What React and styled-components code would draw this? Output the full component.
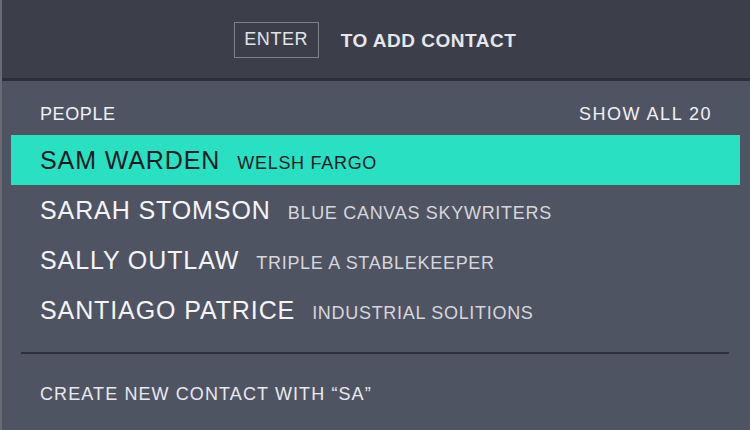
import styled, { createGlobalStyle } from 'styled-components';

const GlobalStyle = createGlobalStyle`
  html, body {
    margin: 0;
    padding: 0;
    background: #4f5463;
  }
  body {
    font-family: "Liberation Sans", Arial, sans-serif;
  }
`;

const people = [
  { name: 'SAM WARDEN', company: 'WELSH FARGO' },
  { name: 'SARAH STOMSON', company: 'BLUE CANVAS SKYWRITERS' },
  { name: 'SALLY OUTLAW', company: 'TRIPLE A STABLEKEEPER' },
  { name: 'SANTIAGO PATRICE', company: 'INDUSTRIAL SOLITIONS' },
];

const Panel = styled.div`
  width: 748px;
  height: 430px;
  border-left: 2px solid #686b74;
  background: #4f5463;
  display: flex;
  flex-direction: column;
  overflow: hidden;
`;

const Header = styled.div`
  height: 78px;
  flex-shrink: 0;
  background: #3c3f49;
  border-bottom: 3px solid #2c2f37;
  display: flex;
  align-items: center;
  justify-content: center;
  gap: 22px;
  padding-right: 2px;
`;

const KeyBox = styled.div`
  width: 83px;
  height: 34px;
  border: 1px solid #7f828a;
  display: flex;
  align-items: center;
  justify-content: center;
  font-size: 18px;
  letter-spacing: 0.6px;
  color: #e2e3e6;
  margin-top: 1px;
`;

const Hint = styled.div`
  font-size: 19px;
  font-weight: 700;
  letter-spacing: 0.5px;
  color: #e6e7ea;
  margin-top: 4px;
`;

const Body = styled.div`
  padding-top: 23px;
  display: flex;
  flex-direction: column;
`;

const SectionRow = styled.div`
  display: flex;
  justify-content: space-between;
  padding: 0 38px 0 38px;
  font-size: 18px;
  line-height: 20px;
  color: #f1f1f3;
`;

const Label = styled.span`
  letter-spacing: ${(p) => p.$spacing || '0.6px'};
`;

const List = styled.div`
  margin: 11px 10px 0 9px;
  display: flex;
  flex-direction: column;
`;

const Row = styled.div`
  height: 50px;
  display: flex;
  align-items: baseline;
  padding-left: 29px;
  line-height: 50px;
  background: ${(p) => (p.$active ? '#2ae0c3' : 'transparent')};
  color: ${(p) => (p.$active ? '#161b22' : '#f4f4f5')};
`;

const Name = styled.span`
  font-size: 25px;
  letter-spacing: 0.9px;
`;

const Company = styled.span`
  font-size: 18px;
  letter-spacing: 0.7px;
  margin-left: 17px;
  color: ${(p) => (p.$active ? '#161b22' : '#d6d7db')};
`;

const Divider = styled.div`
  height: 2px;
  background: #2e3139;
  margin: 17px 21px 0 19px;
`;

const Footer = styled.div`
  margin-top: 30px;
  padding-left: 38px;
  font-size: 18px;
  line-height: 20px;
  letter-spacing: 1.1px;
  color: #e8e9ec;
`;

export default function App() {
  return (
    <>
      <GlobalStyle />
      <Panel>
        <Header>
          <KeyBox>ENTER</KeyBox>
          <Hint>TO ADD CONTACT</Hint>
        </Header>
        <Body>
          <SectionRow>
            <Label>PEOPLE</Label>
            <Label $spacing="1.5px">SHOW ALL 20</Label>
          </SectionRow>
          <List>
            {people.map((person, i) => (
              <Row key={person.name} $active={i === 0}>
                <Name>{person.name}</Name>
                <Company $active={i === 0}>{person.company}</Company>
              </Row>
            ))}
          </List>
          <Divider />
          <Footer>CREATE NEW CONTACT WITH “SA”</Footer>
        </Body>
      </Panel>
    </>
  );
}
